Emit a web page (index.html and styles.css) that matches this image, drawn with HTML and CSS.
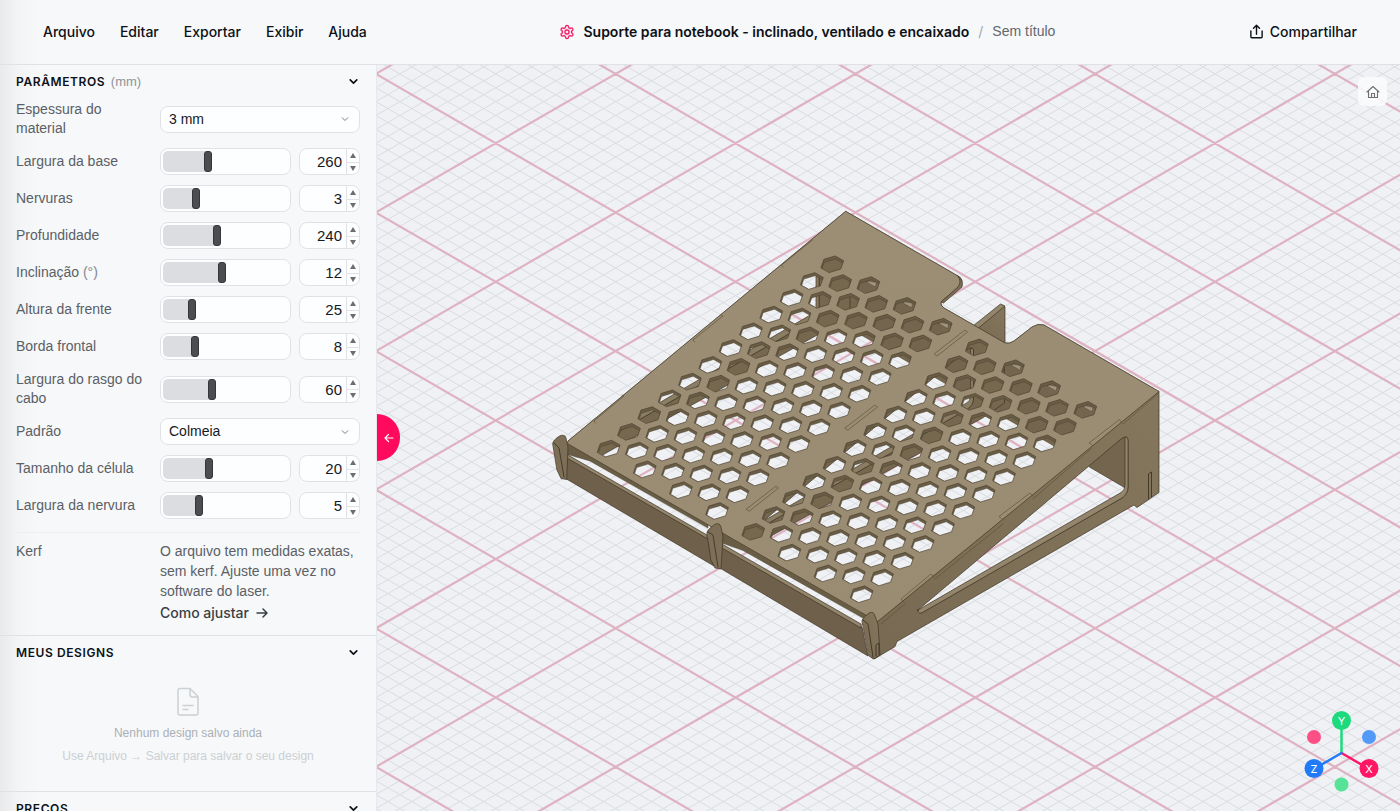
FILE: index.html
```html
<!DOCTYPE html>
<html lang="pt-BR">
<head>
<meta charset="utf-8">
<title>Suporte para notebook</title>
<link rel="stylesheet" href="styles.css">
</head>
<body>
<div class="app">
  <header class="topbar">
    <nav class="menu" aria-label="Menu principal">
      <button type="button">Arquivo</button>
      <button type="button">Editar</button>
      <button type="button">Exportar</button>
      <button type="button">Exibir</button>
      <button type="button">Ajuda</button>
    </nav>
    <div class="crumbs">
      <svg class="gear" viewBox="0 0 24 24" aria-hidden="true"><path d="M12.2 2h-.4a2 2 0 0 0-2 2v.2a2 2 0 0 1-1 1.7l-.4.3a2 2 0 0 1-2 0l-.2-.1a2 2 0 0 0-2.7.7l-.2.4a2 2 0 0 0 .7 2.7l.2.1a2 2 0 0 1 1 1.7v.5a2 2 0 0 1-1 1.8l-.2.1a2 2 0 0 0-.7 2.7l.2.4a2 2 0 0 0 2.7.7l.2-.1a2 2 0 0 1 2 0l.4.3a2 2 0 0 1 1 1.7v.2a2 2 0 0 0 2 2h.4a2 2 0 0 0 2-2v-.2a2 2 0 0 1 1-1.7l.4-.3a2 2 0 0 1 2 0l.2.1a2 2 0 0 0 2.7-.7l.2-.4a2 2 0 0 0-.7-2.7l-.2-.1a2 2 0 0 1-1-1.8v-.5a2 2 0 0 1 1-1.7l.2-.1a2 2 0 0 0 .7-2.7l-.2-.4a2 2 0 0 0-2.7-.7l-.2.1a2 2 0 0 1-2 0l-.4-.3a2 2 0 0 1-1-1.7V4a2 2 0 0 0-2-2z"/><circle cx="12" cy="12" r="3"/></svg>
      <h1>Suporte para notebook - inclinado, ventilado e encaixado</h1>
      <span class="slash">/</span>
      <span class="docname">Sem título</span>
    </div>
    <button type="button" class="share">
      <svg viewBox="0 0 16 16" aria-hidden="true"><path d="M2 7.500v6.200c0 .6.4 1 1 1h10c.6 0 1-.4 1-1V7.500M8 11V1.500M4.800 4.500L8 1.300l3.200 3.200"/></svg>
      Compartilhar
    </button>
  </header>

  <aside class="sidebar">
    <section class="section params">
      <button type="button" class="section-head"><span>PARÂMETROS <small>(mm)</small></span><svg class="chev" viewBox="0 0 10 10" aria-hidden="true"><path d="M2 3.500l3 3 3-3"/></svg></button>
      <div class="rows">
        <div class="row"><label for="mat">Espessura do material</label><select id="mat"><option>3 mm</option></select></div>
        <div class="row" data-name="Largura da base" data-min="120" data-max="520" data-value="260"></div>
        <div class="row" data-name="Nervuras" data-min="2" data-max="6" data-value="3"></div>
        <div class="row" data-name="Profundidade" data-min="120" data-max="400" data-value="240"></div>
        <div class="row" data-name="Inclinação" data-unit="(°)" data-min="5" data-max="20" data-value="12"></div>
        <div class="row" data-name="Altura da frente" data-min="10" data-max="80" data-value="25"></div>
        <div class="row" data-name="Borda frontal" data-min="4" data-max="21" data-value="8"></div>
        <div class="row" data-name="Largura do rasgo do cabo" data-min="10" data-max="140" data-value="60"></div>
        <div class="row"><label for="pat">Padrão</label><select id="pat"><option>Colmeia</option></select></div>
        <div class="row" data-name="Tamanho da célula" data-min="11" data-max="36" data-value="20"></div>
        <div class="row" data-name="Largura da nervura" data-min="2" data-max="13" data-value="5"></div>
      </div>
      <div class="kerf">
        <span>Kerf</span>
        <div>
          <p>O arquivo tem medidas exatas, sem kerf. Ajuste uma vez no software do laser.</p>
          <a href="#kerf">Como ajustar <svg viewBox="0 0 12 12" aria-hidden="true"><path d="M1 6h10M7 2l4 4-4 4"/></svg></a>
        </div>
      </div>
    </section>
    <section class="section designs">
      <button type="button" class="section-head"><span>MEUS DESIGNS</span><svg class="chev" viewBox="0 0 10 10" aria-hidden="true"><path d="M2 3.500l3 3 3-3"/></svg></button>
      <div class="empty">
        <svg viewBox="0 0 24 30" aria-hidden="true"><path d="M4 1.500h10l8 8V26a2 2 0 0 1-2 2H4a2 2 0 0 1-2-2V3.500a2 2 0 0 1 2-2zM14 1.500V7.500a2.500 2.500 0 0 0 2.500 2.500H22M7 18.500h10M7 22.500h5"/></svg>
        <p>Nenhum design salvo ainda</p>
        <p class="hint">Use Arquivo → Salvar para salvar o seu design</p>
      </div>
    </section>
    <section class="section">
      <button type="button" class="section-head"><span>PREÇOS</span><svg class="chev" viewBox="0 0 10 10" aria-hidden="true"><path d="M2 3.500l3 3 3-3"/></svg></button>
    </section>
  </aside>

  <main class="viewport">
    <svg class="scene" viewBox="377 65 1023 746" preserveAspectRatio="xMidYMid slice" role="img" aria-label="Modelo 3D">
      <defs>
        <linearGradient id="plateFill" x1="0" y1="0" x2="0" y2="1"><stop offset="0" stop-color="#9c8e75"/><stop offset="1" stop-color="#9a8c72"/></linearGradient>
        <linearGradient id="sideFill" x1="0" y1="1" x2="1" y2="0"><stop offset="0" stop-color="#786a52"/><stop offset="1" stop-color="#85775d"/></linearGradient>
        <clipPath id="plateClip"><path id="plateClipPath"/></clipPath>
      </defs>
      <path id="gridMinor" class="grid-minor"/>
      <path id="gridMajor" class="grid-major"/>
      <g clip-path="url(#plateClip)">
        <path class="back" d="M817 215L1128 394V489L817 310Z"/>
        <g id="innerRibs"></g>
      </g>
      <g class="ink">
        <path class="side" d="M975 326L1002 305 1005 307V345L990 342Z"/>
        <path class="light" d="M973 326L1000.500 304 1005 306 978.500 328Z"/>
        <path class="back" d="M1089 461L1128 434V489.500L1089.500 467Z"/>
        <path class="side" fill-rule="evenodd" d="M877 620L1159 391V492.500L1137 507.500 1134 505 897 641.500 895 646.500 875 658.500 872 658ZM918 610L1121 439Q1128 434 1128 441V487Q1128 494 1122 498L925 611Q918 616 918 610Z"/>
        <path class="light" d="M918 610L1121 492.500Q1125 490 1125 485V437.500Q1128 436 1128 441V487Q1128 494 1122 498L925 611Q918 616 918 610Z"/>
      </g>
      <path id="plateWalls" class="walls" fill-rule="evenodd"/>
      <path id="plateTop" class="plate" fill-rule="evenodd"/>
      <g id="slivers" class="sliver"></g>
      <g class="ink">
        <path class="tab" d="M958 276Q964 280 962 287L943.500 303 941 302 958 287Q962 282 958 276Z"/>
        <path class="walls" d="M568 444L708 525V528L590 461 566 454ZM722 533L866 615 863 618 743 550.500 722 543Z"/>
        <path class="front" d="M566.500 457L707 537.500 714 566 566.500 479ZM721.500 546L862 627 868 656 721.500 569Z"/>
        <path class="light" d="M568 455L707 535V538.500L567 458ZM722 544L861 624V628L722 548Z"/>
        <path class="tab" d="M552.700 443.500Q553 440 560 435.700 565 434 566 438L568 448 566.700 479.500 561 478.500 557 470Z"/>
        <path class="tab" d="M707 532Q708 529 714.500 524.500 719.500 522 721 527L723 537 721 569 715 568 711 560Z"/>
        <path class="side" d="M862 620.500Q863 617 869 613 874 611 875 616L878 624 880 655 874 659 869 656Z"/>
        <path class="tabline" d="M554 443L559 448 564 477M708 532L713 535 718 567M863 620L868 624 873 657M876 656V645L879 643V655M1148.500 499V474L1151.500 472V497"/>
      </g>
      <path class="seams" d="M934.700 353.500L965 330 967.500 332 937 356ZM845 428L875 405 877.500 407 848 430ZM746.500 509L776 486 778.500 488 749.500 511ZM783 267L781.500 265 812.500 240M694.500 342L693 340 723 316 721 315M595.500 423L594 421 624 396 622 395M1092 445L1089 443 1119.500 419.500 1122 423M1002 519L999 516.500 1030 493 1033 496M903.500 602L901 599 931 574 934 577"/>
      <path class="seams dashed" d="M881 624L905 604M935 579L1003 524M1033 499L1092 448M1123 424L1158 394"/>

      <g class="gizmo">
        <circle cx="1314" cy="737" r="7" fill="#fa5085"/><circle cx="1369" cy="737" r="7" fill="#5399f7"/><circle cx="1341.500" cy="784.500" r="7" fill="#56e398"/>
        <path stroke="#1ddb7d" d="M1341.500 753V721"/><path stroke="#ff1765" d="M1341.500 753L1369 769"/><path stroke="#217bf6" d="M1341.500 753L1314 769"/>
        <circle cx="1341.500" cy="720.500" r="9.500" fill="#1ddb7d"/><circle cx="1369" cy="768.500" r="9.500" fill="#ff1765"/><circle cx="1314" cy="768.500" r="9.500" fill="#217bf6"/>
        <text x="1341.500" y="725">Y</text><text x="1369" y="773">X</text><text x="1314" y="773">Z</text>
      </g>
    </svg>
    <button type="button" class="collapse" aria-label="Recolher painel"><svg viewBox="0 0 10 10" aria-hidden="true"><path d="M9 5H1M4.500 1.500L1 5l3.500 3.500"/></svg></button>
    <button type="button" class="home" aria-label="Vista inicial"><svg viewBox="0 0 14 14" aria-hidden="true"><path d="M1 7l6-5.500L13 7M2.500 6v6.500h9V6M5.500 12.500V8.500h3v4"/></svg></button>
  </main>
</div>
<script src="app.js"></script>
</body>
</html>
```

FILE: styles.css
```css
* { box-sizing: border-box; }
body { margin: 0; font: 14px/19px "Liberation Sans", Arial, sans-serif; color: #0d1117; background: #f6f8fa; }
button { font: inherit; color: inherit; background: none; border: 0; padding: 0; cursor: pointer; }
p, h1 { margin: 0; }
svg { fill: none; stroke: currentColor; stroke-linecap: round; stroke-linejoin: round; }

.app { display: grid; grid-template: 65px minmax(0, 1fr) / 377px minmax(0, 1fr); height: 100vh; background: linear-gradient(90deg, #e8eaec, #f2f4f6 18px, #f6f8fa 40px); overflow: hidden; }

.topbar { grid-column: 1 / -1; display: grid; grid-template-columns: 377px minmax(0, 1fr) auto; align-items: center; padding-bottom: 1px; border-bottom: 1px solid #dfe1e4; font-family: Inter, sans-serif; font-weight: 500; }
.menu { display: flex; gap: 25px; padding-left: 43px; }
.crumbs { display: flex; align-items: center; justify-content: center; white-space: nowrap; }
.crumbs h1 { font-size: 14px; line-height: 19px; font-weight: 600; margin-left: 8px; }
.gear { width: 16px; height: 16px; color: #f0216b; fill: #fde3ec; stroke-width: 2; }
.slash { color: #a4a8ad; font-weight: 400; margin: 0 9px; }
.docname { font-family: "Liberation Sans", Arial, sans-serif; color: #63676d; font-weight: 400; }
.share { display: flex; align-items: center; gap: 6px; padding: 0 43px 0 11px; }
.share svg { width: 15px; height: 15px; stroke-width: 1.5; }

.sidebar { border-right: 1px solid #e6e8eb; overflow: hidden; }
.section + .section { border-top: 1px solid #dfe1e4; }
.section-head { display: flex; align-items: center; justify-content: space-between; width: 100%; height: 33px; padding: 0 17px 0 16px; font-family: Inter, sans-serif; font-size: 12px; font-weight: 600; letter-spacing: 0.05em; }
.section-head small { font: 13px "Liberation Sans", Arial, sans-serif; letter-spacing: 0; color: #8f9398; margin-left: 2px; }
.chev { width: 11px; height: 11px; stroke-width: 1.5; }
.rows { display: grid; gap: 10px; padding: 2px 16px 0; }
.row { display: grid; grid-template-columns: 130px 200px; gap: 14px; align-items: center; color: #5b5f65; }
.row .unit { color: #83878c; }
select { appearance: none; width: 100%; height: 27px; padding: 0 8px; border: 1px solid #e0e2e5; border-radius: 8px; background: #fdfeff url("data:image/svg+xml,%3Csvg xmlns='http://www.w3.org/2000/svg' width='10' height='10' fill='none' stroke='%23777b80'%3E%3Cpath d='M2 3.500l3 3 3-3'/%3E%3C/svg%3E") no-repeat right 9px center; font: inherit; color: #16191d; }
.pair { display: grid; grid-template-columns: 131px minmax(0, 1fr); gap: 8px; }
.slider { appearance: none; display: block; width: 100%; height: 27px; margin: 0; padding: 2px; border: 1px solid #e0e2e5; border-radius: 8px; background: #fdfeff; }
.slider::-webkit-slider-runnable-track { height: 21px; border-radius: 5px 0 0 5px; background: linear-gradient(#dcdde0, #dcdde0) no-repeat 0 0 / var(--fill) 100%; }
.slider::-webkit-slider-thumb { appearance: none; width: 8px; height: 21px; border-radius: 3px; background: #4b4d51; border: 1px solid #34363a; }
.number { display: grid; grid-template: 1fr 1fr / minmax(0, 1fr) 13px; height: 27px; border: 1px solid #e0e2e5; border-radius: 8px; background: #fdfeff; overflow: hidden; }
.number input { grid-row: 1 / 3; width: 100%; min-width: 0; border: 0; padding: 0 4px 0 0; background: none; font: inherit; font-size: 15px; text-align: right; color: #16191d; appearance: textfield; }
.number input::-webkit-inner-spin-button { display: none; }
.number button { display: grid; place-items: center; border-left: 1px solid #e0e2e5; }
.number button + button { border-top: 1px solid #e0e2e5; }
.number svg { width: 6px; height: 5px; fill: #6a6d72; stroke: none; }

.kerf { display: grid; grid-template-columns: 130px 200px; gap: 14px; margin: 13px 16px 0; padding: 8px 0 12px; border-top: 1px solid #eceef0; line-height: 20px; color: #5b5f65; }
.kerf a { display: inline-flex; align-items: center; gap: 7px; margin-top: 2px; font-family: Inter, sans-serif; color: #3b3f44; font-weight: 500; text-decoration: none; }
.kerf a svg { width: 12px; height: 12px; stroke-width: 1.5; }
.empty { display: flex; flex-direction: column; align-items: center; gap: 4px; padding: 18px 16px 25px; font-size: 12px; color: #acb0b4; }
.empty svg { width: 24px; height: 30px; margin-bottom: 3px; stroke-width: 1.5; color: #cdd0d3; }
.empty .hint { color: #ccd0d3; }

.viewport { position: relative; overflow: hidden; background: #eff1f4; }
.scene { display: block; width: 100%; height: 100%; stroke: none; }
.grid-minor { stroke: #d9dce0; stroke-width: 1; }
.grid-major { stroke: #dfb2c2; stroke-width: 2.2; }
.plate { fill: url(#plateFill); stroke: #4a402f; stroke-width: .7; }
.walls { fill: #6a5d46; stroke: #4a402f; stroke-width: .5; }
.back { fill: #74664e; }
.side { fill: url(#sideFill); }
.light { fill: #94866c; }
.front { fill: #6e604b; }
.tab { fill: #7d6f57; }
.ink { stroke: #3d3424; stroke-width: .7; }
.tabline { fill: none; stroke: #3d3424; stroke-width: .9; }
.sliver { fill: #a1947d; stroke: #4a402f; stroke-width: .4; }
.seams { fill: none; stroke: #55492f; stroke-width: .6; }
.dashed { stroke-dasharray: 2 1; }
.gizmo path { stroke-width: 2.5; }
.gizmo text { fill: #fff; font: 11px Inter, sans-serif; text-anchor: middle; }

.collapse { position: absolute; left: 0; top: 349px; width: 23px; height: 47px; border-radius: 0 24px 24px 0; background: #ff0a5c; color: #fff; display: grid; place-items: center; }
.collapse svg { width: 10px; height: 10px; stroke-width: 1.2; }
.home { position: absolute; right: 13px; top: 12px; width: 29px; height: 29px; border-radius: 6px; background: #fafbfcdd; color: #6c7075; display: grid; place-items: center; }
.home svg { width: 14px; height: 14px; stroke-width: 1.1; }
```

FILE: app.js
```javascript
// Parameter rows: label, slider and number box
document.querySelectorAll('.row[data-name]').forEach((row, n) => {
  const { name, unit, min, max, value } = row.dataset;
  const id = 'param' + n;
  const fill = (value - min) / (max - min) * 100;
  row.innerHTML = `<label for="${id}">${name}${unit ? ` <span class="unit">${unit}</span>` : ''}</label>
    <div class="pair">
      <input class="slider" type="range" aria-label="${name}" min="${min}" max="${max}" value="${value}" style="--fill:${fill}%">
      <div class="number"><input id="${id}" type="number" value="${value}">
        <button type="button" aria-label="Aumentar"><svg viewBox="0 0 6 5"><path d="M3 0l3 5H0z"/></svg></button>
        <button type="button" aria-label="Diminuir"><svg viewBox="0 0 6 5"><path d="M3 5l3-5H0z"/></svg></button>
      </div>
    </div>`;
});

const $ = id => document.getElementById(id);

// Isometric floor grid, ten minor cells per major cell
const W = 239.75, H = 138.6, cx = 615.6, cy = 212.5;
function gridPath(step, count, skipMajor) {
  let d = '';
  const s = H / W;
  for (let i = -count; i <= count; i++) {
    if (skipMajor && i % 10 === 0) continue;
    const y = cy + i * step;
    d += `M100 ${y + (100 - cx) * s}L1700 ${y + (1700 - cx) * s}`;
    d += `M100 ${y - (100 - cx) * s}L1700 ${y - (1700 - cx) * s}`;
  }
  return d;
}
$('gridMinor').setAttribute('d', gridPath(H / 10, 110, true));
$('gridMajor').setAttribute('d', gridPath(H, 11, false));

// Honeycomb plate
const outline = 'M568 441L845.700 211.300 958 276Q965 280 959 287L942 301Q939 304 944 308L1005 343Q1010 344 1014 341L1032 327Q1038 323 1044 325L1159 391.500 877 622 868 617 568 444Z';
const a = [-20.33, 16.76], e = [36.15, 20.8];
const b = [(e[0] - a[0]) / 2, (e[1] - a[1]) / 2];
const k = 0.7 / 3;
const v = [
  [2 * a[0] + b[0], 2 * a[1] + b[1]],
  [a[0] + 2 * b[0], a[1] + 2 * b[1]],
  [b[0] - a[0], b[1] - a[1]]
].map(p => [p[0] * k, p[1] * k]);
const hex = [...v, ...v.map(p => [-p[0], -p[1]])];
function holes(dx, dy) {
  let d = '';
  for (let col = 0; col <= 14; col++) {
    if (col === 7) continue;
    const odd = col % 2;
    for (let i = 0; i < (odd ? 11 : 12); i++) {
      const u = i + (odd ? 0.5 : 0);
      const x = 832.3 + col * e[0] / 2 + u * a[0] + dx;
      const y = 264.2 + col * e[1] / 2 + u * a[1] + dy;
      d += 'M' + hex.map(p => (x + p[0]).toFixed(2) + ' ' + (y + p[1]).toFixed(2)).join('L') + 'Z';
    }
  }
  return d;
}
$('plateClipPath').setAttribute('d', outline);
$('plateTop').setAttribute('d', outline + holes(0, 0));
$('plateWalls').setAttribute('d', outline + holes(0.3, 3));

// Left and middle ribs, seen through the openings
const rib = 'M877 620L1159 391V492L1137 507 897 641 873 658ZM918 610L1121 439Q1128 434 1128 441V487Q1128 494 1122 498L925 611Q918 616 918 610Z';
const edge = 'M918 610L1121 492Q1125 490 1125 485V437L1128 438V487Q1128 494 1122 498L925 611Z';
$('innerRibs').innerHTML = [[-309, -178], [-154.5, -89]].map(t =>
  `<g transform="translate(${t})" stroke="#3d3424" stroke-width=".7"><path fill="#76684f" fill-rule="evenodd" d="${rib}"/><path fill="#8b7d63" d="${edge}"/></g>`).join('');

// Light edge of the back panel behind the last row of holes
$('slivers').innerHTML = [[868.4, 285], [904.6, 305.8], [940.7, 326.6], [1013, 368.2], [1049, 389], [1085, 409.8]].map(p =>
  `<path d="M${p[0]} ${p[1] - 4}L${p[0] + 8} ${p[1] - 2.5} ${p[0] + 7} ${p[1] + 2} ${p[0] - 1} ${p[1] - 2.5}Z"/>`).join('');
```
